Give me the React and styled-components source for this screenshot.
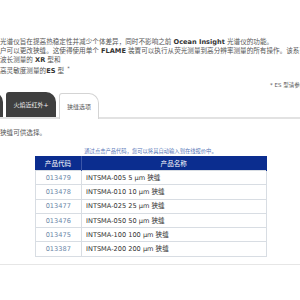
import React from "react";
import styled, { createGlobalStyle } from "styled-components";

const Global = createGlobalStyle`
  html, body { margin: 0; padding: 0; background: #fff; }
  body { width: 300px; height: 300px; overflow: hidden; }
  #root { width: 300px; }
`;

const Page = styled.div`
  font-family: "DejaVu Sans", "Noto Sans CJK SC", sans-serif;
  color: #555;
  font-size: 6.6px;
  padding-top: 38px;
  overflow: hidden;
  width: 300px;
`;

const Line = styled.div`
  white-space: nowrap;
  line-height: 9px;
  height: 9px;
  margin-top: ${(p) => p.$mt || 0}px;
`;

const B = styled.b`
  color: #333;
  font-weight: bold;
`;

const Sup = styled.sup`
  font-size: 5px;
  line-height: 0;
  margin-left: 3px;
`;

const Note = styled.div`
  white-space: nowrap;
  font-size: 5.5px;
  line-height: 8px;
  height: 8px;
  padding-left: 270px;
  margin-top: 5px;
  color: #555;
`;

const TabBar = styled.div`
  display: flex;
  align-items: flex-end;
  height: 25px;
  margin-top: 3px;
  border-bottom: 2px solid #e2e2e2;
  margin-left: -47px;
`;

const Tab = styled.div`
  box-sizing: border-box;
  height: ${(p) => (p.$active ? 26 : 25)}px;
  margin-bottom: ${(p) => (p.$active ? -2 : 0)}px;
  width: ${(p) => p.$w}px;
  margin-right: 3px;
  display: flex;
  align-items: center;
  justify-content: center;
  white-space: nowrap;
  font-size: 6px;
  border-radius: 3px 10px 0 0;
  background: ${(p) => (p.$active ? "#fff" : "#3f3f3f")};
  color: ${(p) => (p.$active ? "#555" : "#f2f2f2")};
  border: ${(p) => (p.$active ? "1px solid #d4d4d4" : "none")};
  border-bottom: none;
`;

const Intro = styled.div`
  white-space: nowrap;
  line-height: 9px;
  height: 9px;
  margin-top: 9.5px;
`;

const Center = styled.div`
  display: flex;
  flex-direction: column;
  align-items: center;
  margin-top: 9.5px;
  padding-left: 1px;
`;

const Caption = styled.div`
  font-size: 5.3px;
  line-height: 8px;
  height: 8px;
  color: #5877b8;
  white-space: nowrap;
  margin-bottom: 1px;
`;

const Table = styled.table`
  border-collapse: collapse;
  width: 232px;
  font-size: 6.6px;
`;

const Th = styled.th`
  background: #0b2d8f;
  color: #fff;
  font-weight: normal;
  height: 14px;
  padding: 0;
  width: ${(p) => p.$w || "auto"};
  border-right: 1px solid ${(p) => (p.$sep ? "#3b56a8" : "#0b2d8f")};
  text-align: center;
`;

const Tr = styled.tr`
  height: 14.3px;
`;

const Td = styled.td`
  border: 1px solid #d8dde3;
  padding: 0 4px;
  line-height: 8px;
  white-space: nowrap;
  text-align: ${(p) => (p.$code ? "center" : "left")};
  color: ${(p) => (p.$code ? "#6b87a8" : "#333")};
`;

const Rule = styled.div`
  height: 1px;
  background: #e6e6e6;
  margin-top: 7px;
  width: 300px;
`;

const rows = [
  ["013479", "INTSMA-005 5 µm 狭缝"],
  ["013478", "INTSMA-010 10 µm 狭缝"],
  ["013477", "INTSMA-025 25 µm 狭缝"],
  ["013476", "INTSMA-050 50 µm 狭缝"],
  ["013475", "INTSMA-100 100 µm 狭缝"],
  ["013387", "INTSMA-200 200 µm 狭缝"],
];

export default function App() {
  return (
    <>
      <Global />
      <Page>
        <Line>
          光谱仪旨在提高热稳定性并减少个体差异，同时不影响之前 <B>Ocean Insight</B> 光谱仪的功能。
        </Line>
        <Line>
          户可以更改狭缝。这使得使用单个 <B>FLAME</B> 装置可以执行从荧光测量到高分辨率测量的所有操作。该系列
        </Line>
        <Line>
          波长测量的 <B>XR</B> 型和
        </Line>
        <Line $mt={2}>
          高灵敏度测量的<B>ES</B> 型<Sup>*</Sup>
        </Line>
        <Note>* ES 型请参阅</Note>
        <TabBar>
          <Tab $w={50}>火焰</Tab>
          <Tab $w={50}>火焰近红外+</Tab>
          <Tab $w={40} $active>狭缝选项</Tab>
        </TabBar>
        <Intro>狭缝可供选择。</Intro>
        <Center>
          <Caption>通过点击产品代码，您可以将其自动输入到在线报价中。</Caption>
          <Table>
            <thead>
              <tr>
                <Th $w="46px" $sep>产品代码</Th>
                <Th>产品名称</Th>
              </tr>
            </thead>
            <tbody>
              {rows.map(([code, name]) => (
                <Tr key={code}>
                  <Td $code>{code}</Td>
                  <Td>{name}</Td>
                </Tr>
              ))}
            </tbody>
          </Table>
        </Center>
        <Rule />
      </Page>
    </>
  );
}
